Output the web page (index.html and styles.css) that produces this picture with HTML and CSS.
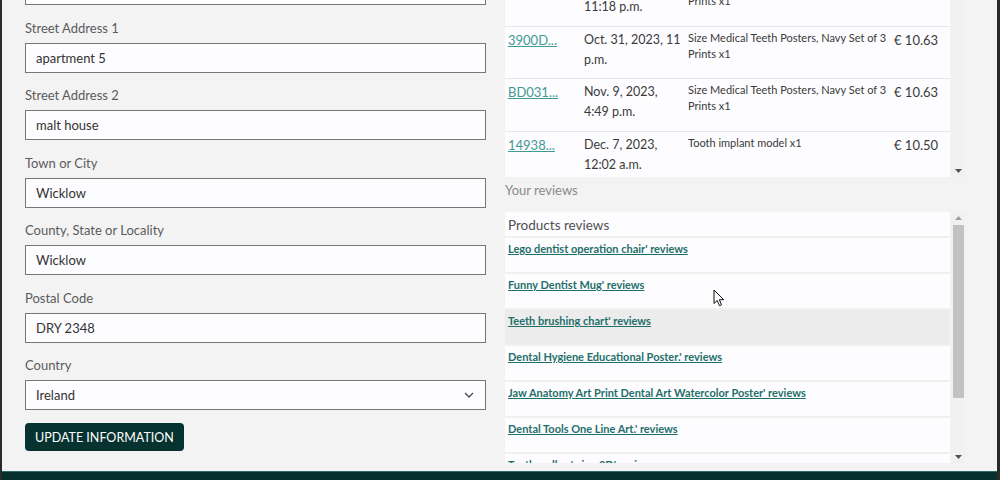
FILE: index.html
```html
<!DOCTYPE html>
<html lang="en">
<head>
<meta charset="utf-8">
<title>Profile</title>
<link rel="stylesheet" href="styles.css">
</head>
<body>
<div class="frame">
  <main class="main">
    <section class="form-col">
      <div class="field field-first">
        <input class="input" type="text" value="Dublin road">
      </div>
      <div class="field">
        <label class="label">Street Address 1</label>
        <input class="input" type="text" value="apartment 5">
      </div>
      <div class="field">
        <label class="label">Street Address 2</label>
        <input class="input" type="text" value="malt house">
      </div>
      <div class="field">
        <label class="label">Town or City</label>
        <input class="input" type="text" value="Wicklow">
      </div>
      <div class="field">
        <label class="label">County, State or Locality</label>
        <input class="input" type="text" value="Wicklow">
      </div>
      <div class="field">
        <label class="label">Postal Code</label>
        <input class="input" type="text" value="DRY 2348">
      </div>
      <div class="field">
        <label class="label">Country</label>
        <div class="select">
          <span>Ireland</span>
          <svg class="chev" width="10" height="6" viewBox="0 0 10 6"><path d="M1 1l4 4 4-4" fill="none" stroke="#4a4a4a" stroke-width="1.3"/></svg>
        </div>
      </div>
      <button class="btn" type="button">UPDATE INFORMATION</button>
    </section>

    <section class="side-col">
      <div class="scroll-box orders">
        <div class="viewport">
          <table class="orders-table">
            <colgroup><col class="c1"><col class="c2"><col class="c3"><col class="c4"></colgroup>
            <tbody>
              <tr>
                <td><a href="#">A71C2...</a></td>
                <td class="date">Oct. 30, 2023, 11:18 p.m.</td>
                <td class="items">Size Medical Teeth Posters, Navy Set of 3 Prints x1</td>
                <td>€ 10.63</td>
              </tr>
              <tr>
                <td><a href="#">3900D...</a></td>
                <td class="date">Oct. 31, 2023, 11 p.m.</td>
                <td class="items">Size Medical Teeth Posters, Navy Set of 3 Prints x1</td>
                <td>€ 10.63</td>
              </tr>
              <tr>
                <td><a href="#">BD031...</a></td>
                <td class="date">Nov. 9, 2023, 4:49 p.m.</td>
                <td class="items">Size Medical Teeth Posters, Navy Set of 3 Prints x1</td>
                <td>€ 10.63</td>
              </tr>
              <tr>
                <td><a href="#">14938...</a></td>
                <td class="date">Dec. 7, 2023, 12:02 a.m.</td>
                <td class="items">Tooth implant model x1</td>
                <td>€ 10.50</td>
              </tr>
            </tbody>
          </table>
        </div>
        <div class="sbar">
          <div class="track"></div>
          <div class="sbtn"><svg width="7" height="4" viewBox="0 0 7 4"><path d="M0 0h7L3.5 4z" fill="#505050"/></svg></div>
        </div>
      </div>

      <p class="your-reviews">Your reviews</p>

      <div class="scroll-box reviews">
        <div class="viewport list">
          <div class="list-head">Products reviews</div>
          <div class="row"><a href="#">Lego dentist operation chair' reviews</a></div>
          <div class="row"><a href="#">Funny Dentist Mug' reviews</a></div>
          <div class="row row-hover"><a href="#">Teeth brushing chart' reviews</a></div>
          <div class="row"><a href="#">Dental Hygiene Educational Poster.' reviews</a></div>
          <div class="row"><a href="#">Jaw Anatomy Art Print Dental Art Watercolor Poster' reviews</a></div>
          <div class="row"><a href="#">Dental Tools One Line Art.' reviews</a></div>
          <div class="row"><a href="#">Teeth wall art sign 3D' reviews</a></div>
        </div>
        <div class="sbar">
          <div class="sbtn"><svg width="7" height="4" viewBox="0 0 7 4"><path d="M0 4h7L3.5 0z" fill="#a0a0a0"/></svg></div>
          <div class="track"><div class="thumb"></div></div>
          <div class="sbtn"><svg width="7" height="4" viewBox="0 0 7 4"><path d="M0 0h7L3.5 4z" fill="#505050"/></svg></div>
        </div>
      </div>
    </section>
  </main>
  <footer class="footer"></footer>

  <svg class="cursor" width="13" height="18" viewBox="0 0 13 18"><path d="M1 1v13.5l3.2-3 2.3 5.2 2-0.9-2.2-5.1h4.4z" fill="#fff" stroke="#111" stroke-width="1" stroke-linejoin="round"/></svg>
</div>
</body>
</html>
```

FILE: styles.css
```css
html, body {
  margin: 0;
  height: 480px;
  overflow: hidden;
}

body {
  font-family: Lato, "Open Sans", Arial, sans-serif;
  background: #f3f3f4;
  color: #333;
}

.frame {
  position: relative;
  box-sizing: border-box;
  height: 480px;
  display: flex;
  flex-direction: column;
  border-left: 2px solid #2a2a2a;
  border-right: 3px solid #2a2a2a;
}

.main {
  flex: 1;
  min-height: 0;
  display: flex;
  overflow: hidden;
}

/* ---------- left form ---------- */
.form-col {
  flex: none;
  width: 461px;
  margin-left: 23px;
}

.field-first {
  margin-top: -25px;
}

.label {
  display: block;
  margin: 12.5px 0 5px;
  font-size: 13px;
  line-height: 20px;
  color: #5b5b5b;
}

.input,
.select {
  box-sizing: border-box;
  display: block;
  width: 100%;
  height: 30px;
  margin: 0;
  padding: 0 10px;
  border: 1px solid #777;
  border-radius: 0;
  background: #fdfcfe;
  font-family: inherit;
  font-size: 13px;
  color: #333;
  outline: none;
}

.select {
  display: flex;
  align-items: center;
  justify-content: space-between;
  padding-right: 11px;
}

.btn {
  display: block;
  margin-top: 13px;
  height: 28px;
  padding: 0 10px;
  border: 0;
  border-radius: 4px;
  background: #06322f;
  color: #fff;
  font-family: inherit;
  font-size: 12.5px;
}

/* ---------- right side ---------- */
.side-col {
  flex: none;
  width: 460px;
  margin-left: 19px;
  display: flex;
  flex-direction: column;
}

.scroll-box {
  display: flex;
  gap: 1px;
  flex: none;
}

.viewport {
  width: 445px;
  overflow: hidden;
  background: #fdfcfe;
}

.orders {
  height: 177px;
}

.sbar {
  width: 14px;
  display: flex;
  flex-direction: column;
  background: #f1f1f2;
}

.sbtn {
  flex: none;
  height: 12px;
  display: flex;
  align-items: center;
  justify-content: center;
}

.track {
  flex: 1;
}

.thumb {
  height: 173px;
  margin: 1px 1px 0 2px;
  background: #c2c2c2;
}

.orders-table {
  width: 445px;
  margin-top: -26px;
  table-layout: fixed;
  border-collapse: collapse;
  font-size: 13px;
  line-height: 20px;
  color: #3a3a3a;
}

.c1 { width: 76px; }
.c2 { width: 104px; }
.c3 { width: 206px; }
.c4 { width: 59px; }

.orders-table td {
  vertical-align: top;
  padding: 3px 1px 8.5px 3px;
  border-bottom: 1px solid #e7e7e9;
}

.orders-table td.date {
  font-size: 12.5px;
}

.orders-table td.items {
  font-size: 11px;
  line-height: 16px;
  padding-right: 4px;
}

.orders-table a {
  color: #3f9a94;
  text-decoration: underline;
}

.your-reviews {
  margin: 3px 0 12px;
  font-size: 13px;
  line-height: 20px;
  color: #8a8a8a;
}

.reviews {
  height: 251px;
}

.list {
  background: #f0f0f1;
}

.list-head {
  height: 24px;
  margin-bottom: 2px;
  padding: 3px 3px 0;
  box-sizing: border-box;
  background: #fdfcfe;
  font-size: 13.5px;
  line-height: 20px;
  color: #505050;
}

.row {
  box-sizing: border-box;
  height: 34px;
  margin-bottom: 2px;
  padding: 2px 3px 0;
  background: #fdfcfe;
  line-height: 14px;
}

.row-hover {
  background: #ececed;
}

.row a {
  font-size: 11px;
  font-weight: 700;
  color: #1f6f6a;
  text-decoration: underline;
}

/* ---------- footer ---------- */
.footer {
  flex: none;
  height: 8px;
  background: #05302e;
  border-top: 1px solid #2e6a66;
}

/* mouse pointer in the screenshot */
.cursor {
  position: absolute;
  left: 711px;
  top: 289px;
}
```
